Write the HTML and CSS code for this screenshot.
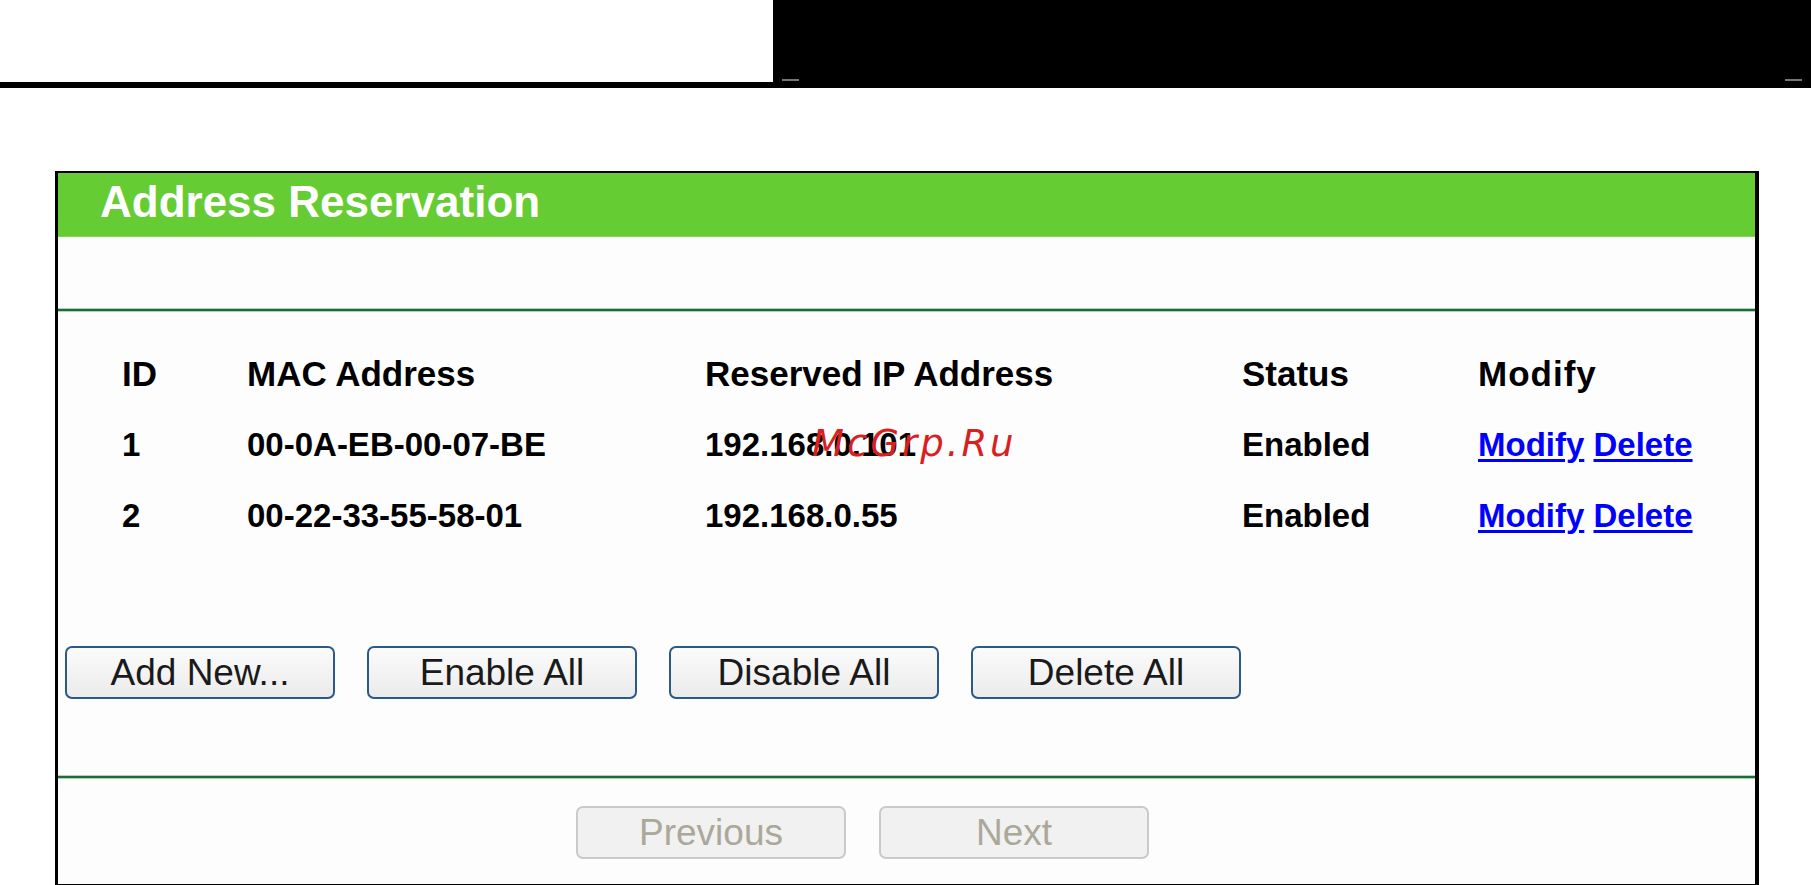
FILE: index.html
```html
<!DOCTYPE html>
<html lang="en">
<head>
<meta charset="UTF-8">
<title>Address Reservation</title>
<link rel="stylesheet" href="styles.css">
</head>
<body>

<div class="topbar">
    <div class="top-white"></div>
    <div class="top-black">
        <span class="tick tick-left"></span>
        <span class="tick tick-right"></span>
    </div>
</div>
<div class="top-rule"></div>

<div class="panel">
    <div class="panel-title">Address Reservation</div>
    <div class="panel-gap"></div>
    <div class="rule"></div>

    <div class="list">
        <div class="row head">
            <div>ID</div>
            <div>MAC Address</div>
            <div>Reserved IP Address</div>
            <div>Status</div>
            <div class="head-modify">Modify</div>
        </div>
        <div class="row">
            <div>1</div>
            <div>00-0A-EB-00-07-BE</div>
            <div class="ip-cell">192.168.0.101<span class="watermark">McGrp.Ru</span></div>
            <div>Enabled</div>
            <div><a href="#" class="link">Modify</a> <a href="#" class="link">Delete</a></div>
        </div>
        <div class="row">
            <div>2</div>
            <div>00-22-33-55-58-01</div>
            <div>192.168.0.55</div>
            <div>Enabled</div>
            <div><a href="#" class="link">Modify</a> <a href="#" class="link">Delete</a></div>
        </div>
    </div>

    <div class="actions">
        <button class="btn">Add New...</button>
        <button class="btn">Enable All</button>
        <button class="btn">Disable All</button>
        <button class="btn">Delete All</button>
    </div>

    <div class="rule"></div>

    <div class="pager">
        <button class="btn btn-off" disabled>Previous</button>
        <button class="btn btn-off" disabled>Next</button>
    </div>
</div>

</body>
</html>
```

FILE: styles.css
```css
body {
    margin: 0;
    padding: 0;
    background-color: #fff;
    font-family: "Liberation Sans", Arial, sans-serif;
    overflow: hidden;
}
.topbar {
    display: flex;
    height: 82px;
}
.top-white {
    width: 773px;
    background-color: #fff;
}
.top-black {
    flex: 1;
    background-color: #000;
    position: relative;
}
.tick {
    position: absolute;
    bottom: 1px;
    width: 17px;
    height: 2px;
    background-color: #777;
}
.tick-left {
    left: 9px;
}
.tick-right {
    right: 9px;
}
.top-rule {
    height: 6px;
    background-color: #000;
}
.panel {
    width: 1704px;
    box-sizing: border-box;
    margin: 83px 0 0 55px;
    border: 3px solid #000;
    border-top-width: 2px;
    border-right-width: 4px;
    background-color: #fdfdfd;
}
.panel-title {
    height: 64px;
    box-sizing: border-box;
    padding-left: 42px;
    line-height: 58px;
    background-color: #66cc33;
    border-bottom: 1px solid #7fd654;
    color: #fff;
    font-size: 44px;
    font-weight: bold;
}
.panel-gap {
    height: 71px;
}
.rule {
    height: 2px;
    background-color: #1d6b3b;
    border-top: 1px solid #b7cfbf;
    border-bottom: 1px solid #a9d6b3;
}
.list {
    padding: 26px 0 0 64px;
}
.row {
    display: grid;
    grid-template-columns: 125px 458px 537px 236px 1fr;
    height: 71px;
    line-height: 71px;
    font-size: 33px;
    font-weight: bold;
    color: #000;
}
.row.head {
    font-size: 35px;
}
.head-modify {
    letter-spacing: 1px;
}
.ip-cell {
    position: relative;
}
.watermark {
    position: absolute;
    left: 107px;
    top: -1px;
    color: #d9201f;
    font-family: "DejaVu Sans", sans-serif;
    font-style: italic;
    font-weight: normal;
    font-size: 37px;
    letter-spacing: 3px;
}
.link {
    color: #0000ff;
    text-decoration: underline;
    text-decoration-thickness: 3px;
    text-underline-offset: 3px;
}
.actions {
    display: flex;
    gap: 32px;
    padding: 95px 0 76px 7px;
}
.pager {
    display: flex;
    gap: 33px;
    padding: 27px 0 25px 518px;
}
.btn {
    width: 270px;
    height: 53px;
    border: 2px solid #2b5a86;
    border-radius: 7px;
    background: linear-gradient(#fbfbfb, #ebebeb);
    color: #1a1a1a;
    font-family: "Liberation Sans", Arial, sans-serif;
    font-size: 37px;
    padding: 0;
    line-height: 49px;
    cursor: pointer;
}
.btn-off {
    border-color: #cacaca;
    background: #f1f1f1;
    color: #aca899;
    cursor: default;
}
```
